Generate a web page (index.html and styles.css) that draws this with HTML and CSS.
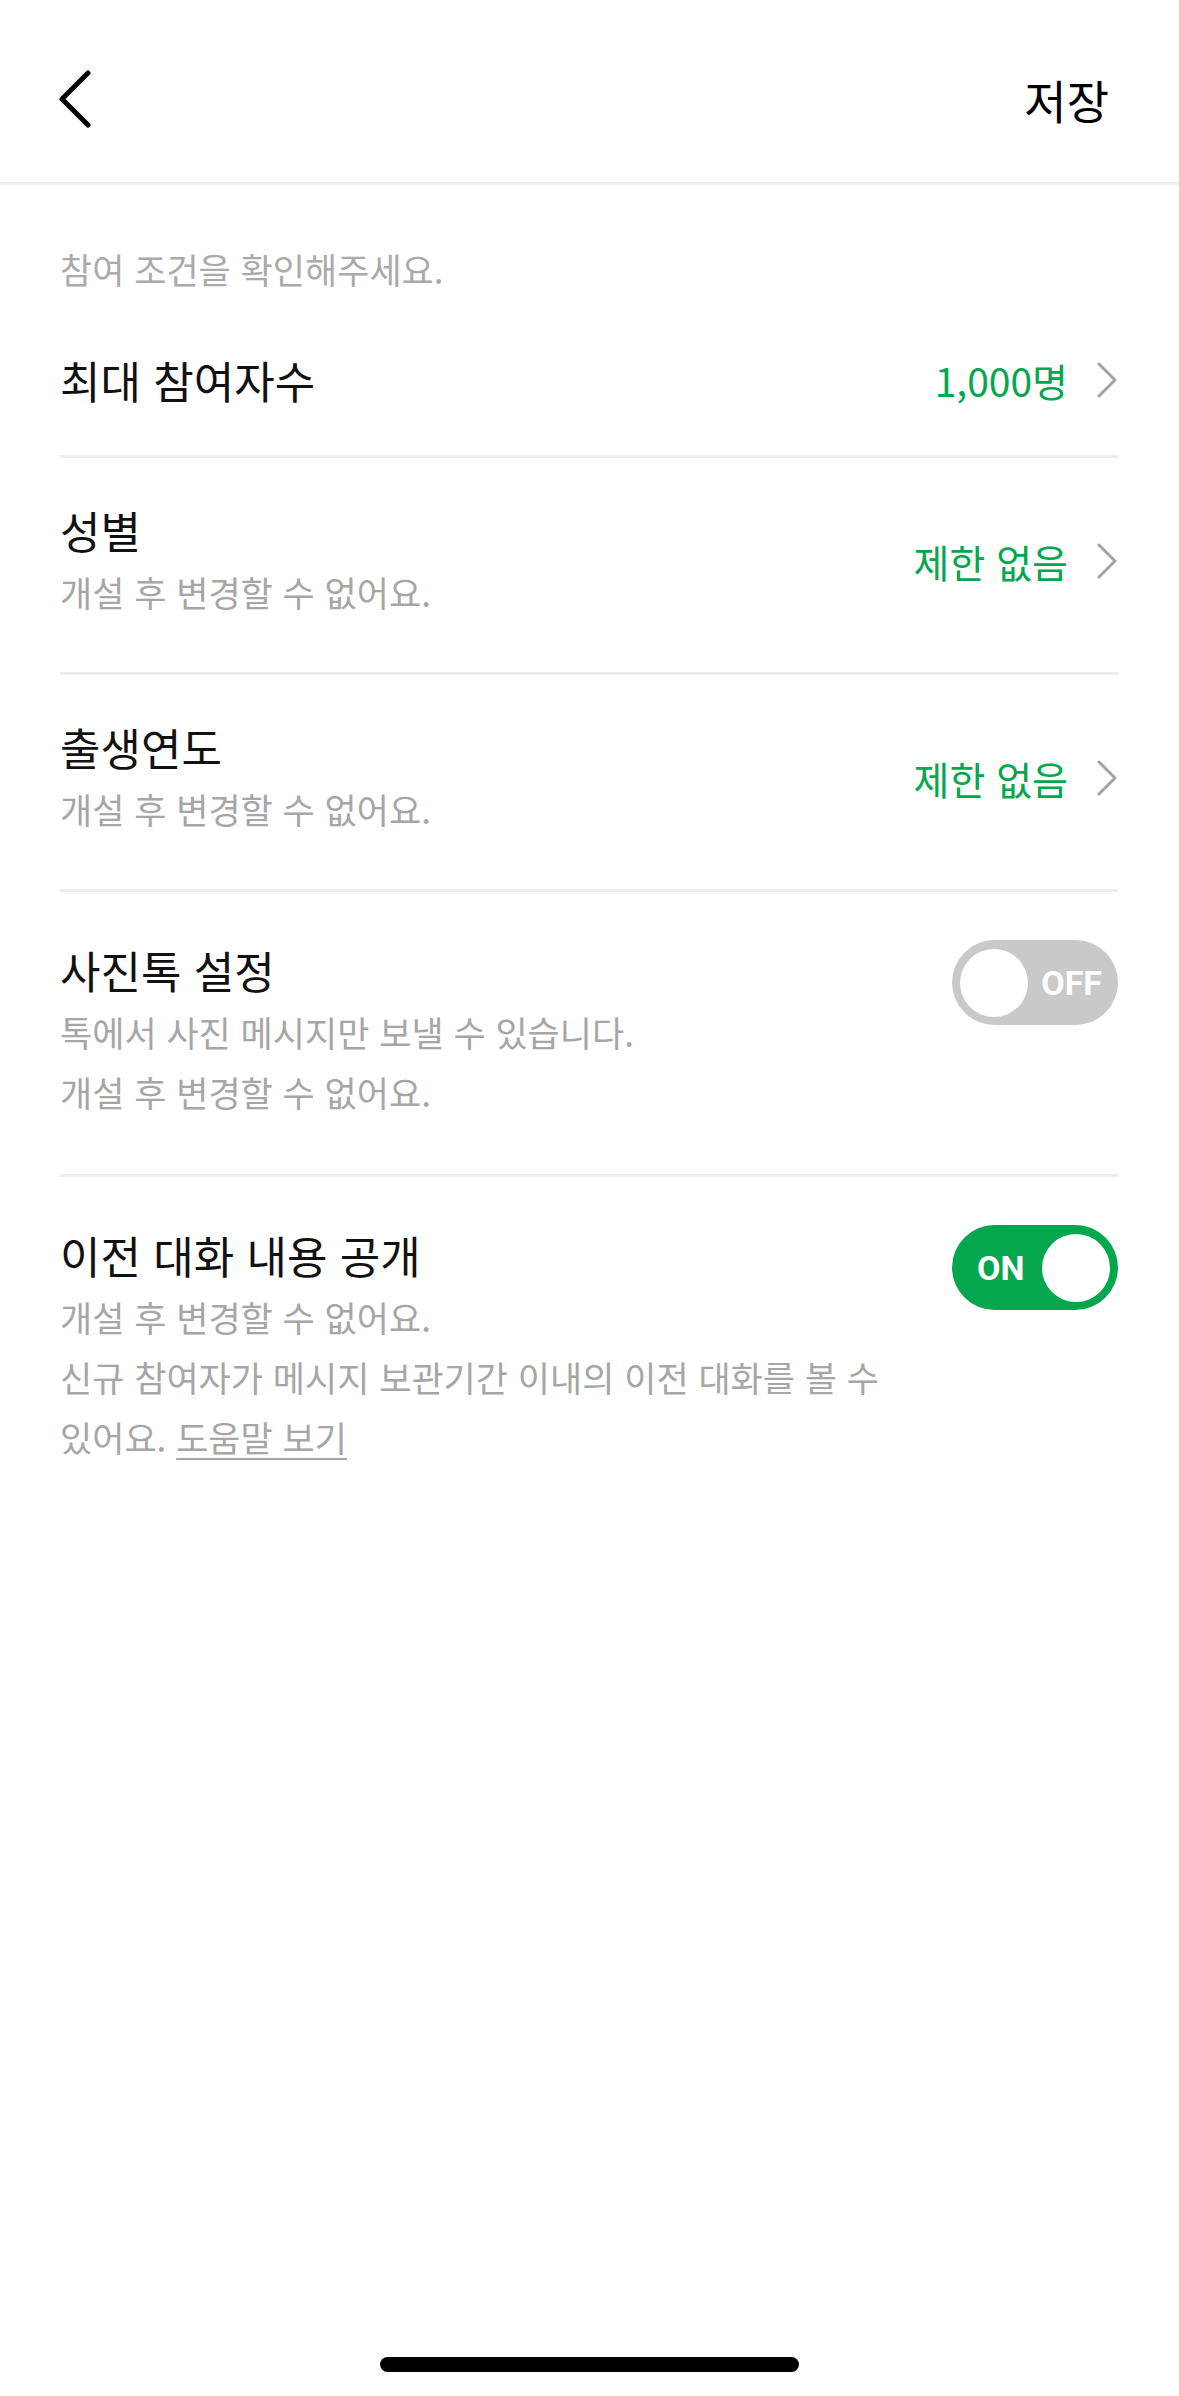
FILE: index.html
```html
<!DOCTYPE html>
<html lang="ko">

  <head>
    <meta charset="UTF-8">
    <meta name="viewport" content="width=device-width, initial-scale=1.0">
    <title>참여 조건</title>
    <link rel="stylesheet" href="styles.css">
  </head>

  <body>
    <header class="topbar">
      <button class="back" aria-label="뒤로">
        <svg width="34" height="58" viewBox="0 0 34 58">
          <polyline points="30,3 4,29 30,55" fill="none" stroke="#000" stroke-width="5" stroke-linecap="round" stroke-linejoin="round" />
        </svg>
      </button>
      <span class="save">저장</span>
    </header>

    <main class="settings">
      <p class="section-label">참여 조건을 확인해주세요.</p>

      <div class="row row-first">
        <div class="row-text">
          <div class="row-title">최대 참여자수</div>
        </div>
        <div class="row-value">
          1,000명
          <svg class="chevron" width="22" height="36" viewBox="0 0 22 36">
            <polyline points="3,2 19,18 3,34" fill="none" stroke="#a3a3a3" stroke-width="3" stroke-linecap="round" stroke-linejoin="round" />
          </svg>
        </div>
      </div>

      <div class="row row-select">
        <div class="row-text">
          <div class="row-title">성별</div>
          <div class="row-desc">개설 후 변경할 수 없어요.</div>
        </div>
        <div class="row-value">
          제한 없음
          <svg class="chevron" width="22" height="36" viewBox="0 0 22 36">
            <polyline points="3,2 19,18 3,34" fill="none" stroke="#a3a3a3" stroke-width="3" stroke-linecap="round" stroke-linejoin="round" />
          </svg>
        </div>
      </div>

      <div class="row row-select">
        <div class="row-text">
          <div class="row-title">출생연도</div>
          <div class="row-desc">개설 후 변경할 수 없어요.</div>
        </div>
        <div class="row-value">
          제한 없음
          <svg class="chevron" width="22" height="36" viewBox="0 0 22 36">
            <polyline points="3,2 19,18 3,34" fill="none" stroke="#a3a3a3" stroke-width="3" stroke-linecap="round" stroke-linejoin="round" />
          </svg>
        </div>
      </div>

      <div class="row row-toggle">
        <div class="row-text">
          <div class="row-title">사진톡 설정</div>
          <div class="row-desc">톡에서 사진 메시지만 보낼 수 있습니다.<br>개설 후 변경할 수 없어요.</div>
        </div>
        <div class="toggle toggle-off">
          <span class="knob"></span>
          <span class="toggle-label">OFF</span>
        </div>
      </div>

      <div class="row row-toggle row-last">
        <div class="row-text">
          <div class="row-title">이전 대화 내용 공개</div>
          <div class="row-desc">개설 후 변경할 수 없어요.<br>신규 참여자가 메시지 보관기간 이내의 이전 대화를 볼 수 있어요. <a class="help" href="#">도움말 보기</a></div>
        </div>
        <div class="toggle toggle-on">
          <span class="toggle-label">ON</span>
          <span class="knob"></span>
        </div>
      </div>
    </main>

    <div class="home">
      <div class="home-bar"></div>
    </div>
  </body>

</html>
```

FILE: styles.css
```css
:root {
  --green: #05a74e;
  --text: #111111;
  --muted: #a6a6a6;
  --line: #ececec;
}

body {
  margin: 0;
  height: 2396px;
  display: flex;
  flex-direction: column;
  background: #ffffff;
  color: var(--text);
  font-family: "Noto Sans CJK KR", "Noto Sans", sans-serif;
  word-break: keep-all;
}

.topbar {
  height: 185px;
  box-sizing: border-box;
  padding: 16px 70px 0 58px;
  display: flex;
  align-items: center;
  justify-content: space-between;
  border-bottom: 3px solid var(--line);
}

.back {
  padding: 0;
  border: none;
  background: none;
  display: flex;
  cursor: pointer;
}

.save {
  font-size: 46px;
  line-height: 60px;
  color: #000;
}

.settings {
  flex: 1;
  padding: 0 61px 0 60px;
}

.section-label {
  margin: 0;
  padding-top: 54px;
  font-size: 35px;
  line-height: 60px;
  color: #aaaaaa;
}

.row {
  display: flex;
  justify-content: space-between;
  border-bottom: 3px solid var(--line);
}

.row-first {
  align-items: center;
  padding: 51px 0 45px;
}

.row-select {
  align-items: center;
  padding: 42px 0 50px;
}

.row-toggle {
  align-items: flex-start;
  padding: 48px 0 52px;
}

.row-last {
  border-bottom: none;
}

.row-text {
  flex: 1;
  max-width: 880px;
}

.row-title {
  font-size: 44px;
  line-height: 60px;
}

.row-desc {
  margin-top: 2px;
  font-size: 35px;
  line-height: 60px;
  color: var(--muted);
}

.help {
  color: var(--muted);
  text-decoration: underline;
  text-decoration-thickness: 2px;
  text-underline-offset: 6px;
}

.row-value {
  display: flex;
  align-items: center;
  gap: 28px;
  font-size: 39px;
  color: var(--green);
}

.toggle {
  width: 166px;
  height: 85px;
  box-sizing: border-box;
  padding: 0 8px;
  border-radius: 43px;
  display: flex;
  align-items: center;
  justify-content: space-between;
  font-family: Roboto, "Noto Sans", sans-serif;
  font-weight: 700;
  font-size: 34px;
  color: #ffffff;
}

.toggle-off {
  background: #c9c9c9;
}

.toggle-off .toggle-label {
  margin-right: 8px;
}

.toggle-on {
  background: var(--green);
}

.toggle-on .toggle-label {
  margin-left: 17px;
}

.knob {
  width: 68px;
  height: 68px;
  border-radius: 50%;
  background: #ffffff;
}

.home {
  display: flex;
  justify-content: center;
  padding-bottom: 24px;
}

.home-bar {
  width: 419px;
  height: 15px;
  border-radius: 8px;
  background: #000000;
}
```
